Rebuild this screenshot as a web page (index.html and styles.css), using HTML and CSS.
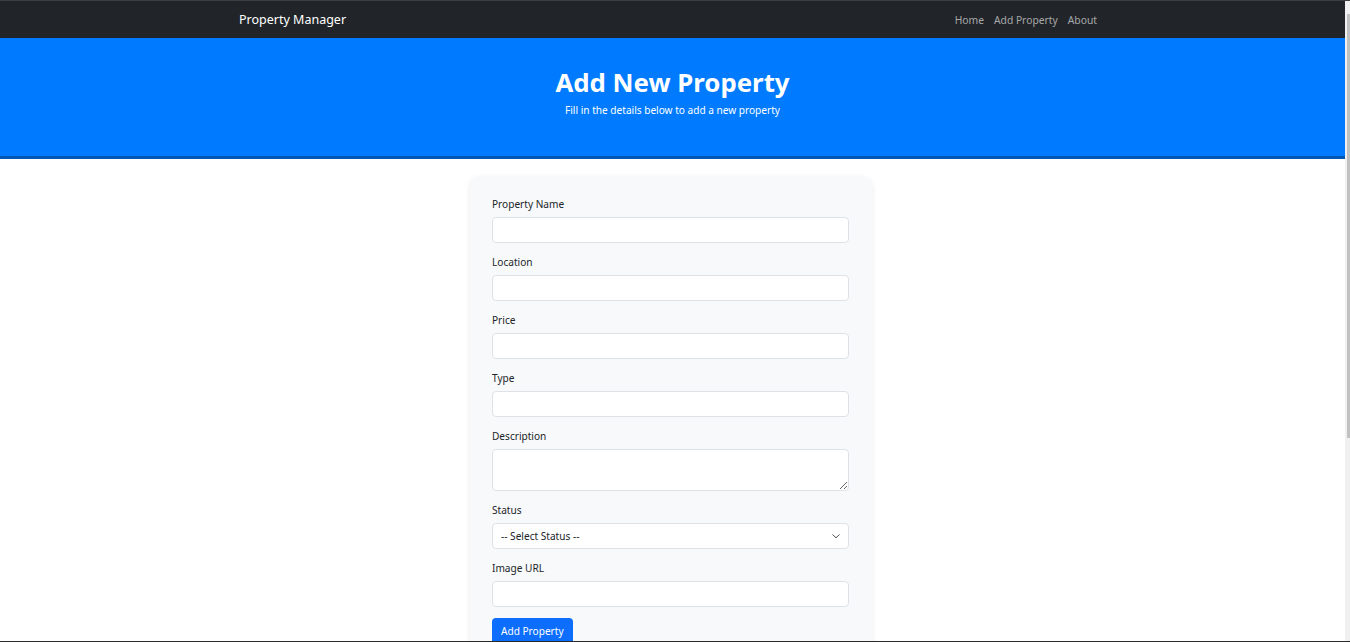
FILE: index.html
```html
<!DOCTYPE html>
<html lang="en">
<head>
<meta charset="utf-8">
<title>Add Property</title>
<link rel="stylesheet" href="styles.css">
</head>
<body>
<div class="frame">
  <div class="frame-edge-top"></div>
  <div class="frame-body">
    <div class="page">
      <nav class="navbar">
        <div class="nav-container">
          <a class="brand" href="#">Property Manager</a>
          <ul class="nav-links">
            <li><a href="#">Home</a></li>
            <li><a href="#">Add Property</a></li>
            <li><a href="#">About</a></li>
          </ul>
        </div>
      </nav>
      <header class="hero">
        <h1>Add New Property</h1>
        <p>Fill in the details below to add a new property</p>
      </header>
      <main class="main">
        <form class="card">
          <div class="field">
            <label>Property Name</label>
            <input class="control" type="text">
          </div>
          <div class="field">
            <label>Location</label>
            <input class="control" type="text">
          </div>
          <div class="field">
            <label>Price</label>
            <input class="control" type="text">
          </div>
          <div class="field">
            <label>Type</label>
            <input class="control" type="text">
          </div>
          <div class="field">
            <label>Description</label>
            <textarea class="control textarea"></textarea>
          </div>
          <div class="field">
            <label>Status</label>
            <div class="select-wrap">
              <select class="control select">
                <option>-- Select Status --</option>
              </select>
              <svg class="chevron" width="10" height="8" viewBox="0 0 10 8"><path d="M1.5 2.5 L5 5.8 L8.5 2.5" fill="none" stroke="#495057" stroke-width="1"/></svg>
            </div>
          </div>
          <div class="field">
            <label>Image URL</label>
            <input class="control" type="text">
          </div>
          <button class="btn" type="button">Add Property</button>
        </form>
      </main>
    </div>
    <div class="scrollbar"><div class="thumb"></div></div>
  </div>
  <div class="frame-edge-bottom"></div>
</div>
</body>
</html>
```

FILE: styles.css
```css
* { box-sizing: border-box; }
html, body { margin: 0; padding: 0; height: 642px; overflow: hidden; }
body {
  font-family: "Noto Sans", "Open Sans", Arial, sans-serif;
  color: #212529;
  background: #fff;
}
.frame { display: flex; flex-direction: column; height: 642px; }
.frame-edge-top { height: 1px; background: #3b3d3f; flex: none; }
.frame-edge-bottom { height: 1px; background: #2a2a2a; flex: none; }
.frame-body { flex: 1; display: flex; min-height: 0; }
.page { flex: 1; overflow: hidden; background: #fff; }
.scrollbar { width: 5px; flex: none; background: #f0f0f0; display: flex; justify-content: flex-end; padding-top: 13px; }
.thumb { width: 3px; height: 424px; background: #c1c1c1; }

.navbar { background: #212529; height: 37px; }
.nav-container {
  width: 869px; margin: 0 auto; height: 100%;
  display: flex; align-items: center; justify-content: space-between;
  padding-left: 1px;
}
.brand { color: #fff; text-decoration: none; font-size: 12.5px; }
.nav-links { list-style: none; margin: 0; padding: 0; display: flex; }
.nav-links a { color: rgba(255,255,255,0.6); text-decoration: none; font-size: 10.3px; padding: 0 5px; display: block; }
.nav-links li:last-child a { padding-right: 10px; }

.hero {
  background: #007bff; color: #fff; text-align: center;
  height: 121px; border-bottom: 3px solid #0056b3;
  padding-top: 26px;
}
.hero h1 { margin: 0; font-size: 25.8px; font-weight: 700; line-height: 36px; }
.hero p { margin: 2px 0 0; font-size: 10.1px; line-height: 17px; }

.main { display: flex; justify-content: center; padding-top: 18px; }
.card {
  width: 402px; background: #f8f9fa; border-radius: 10px;
  padding: 19px 23px 20px 22px;
  box-shadow: 0 1px 6px rgba(0,0,0,0.08);
  margin-left: -3px;
}
.field { margin-bottom: 11px; }
.field label { display: block; font-size: 10.1px; line-height: 16px; margin-bottom: 5px; }
.control {
  display: block; width: 100%; height: 26px;
  border: 1px solid #dee2e6; border-radius: 4px; background: #fff;
  font-family: inherit; font-size: 10.1px; color: #212529; padding: 0 8px;
  outline: none;
}
.textarea { height: 42px; resize: vertical; }
.select-wrap { position: relative; }
.select { appearance: none; -webkit-appearance: none; padding-left: 8px; }
.chevron { position: absolute; right: 8px; top: 9px; pointer-events: none; }
.btn {
  background: #0d6efd; color: #fff; border: none; border-radius: 4px;
  font-family: inherit; font-size: 10.1px; height: 26px; padding: 0 9px;
}
```
